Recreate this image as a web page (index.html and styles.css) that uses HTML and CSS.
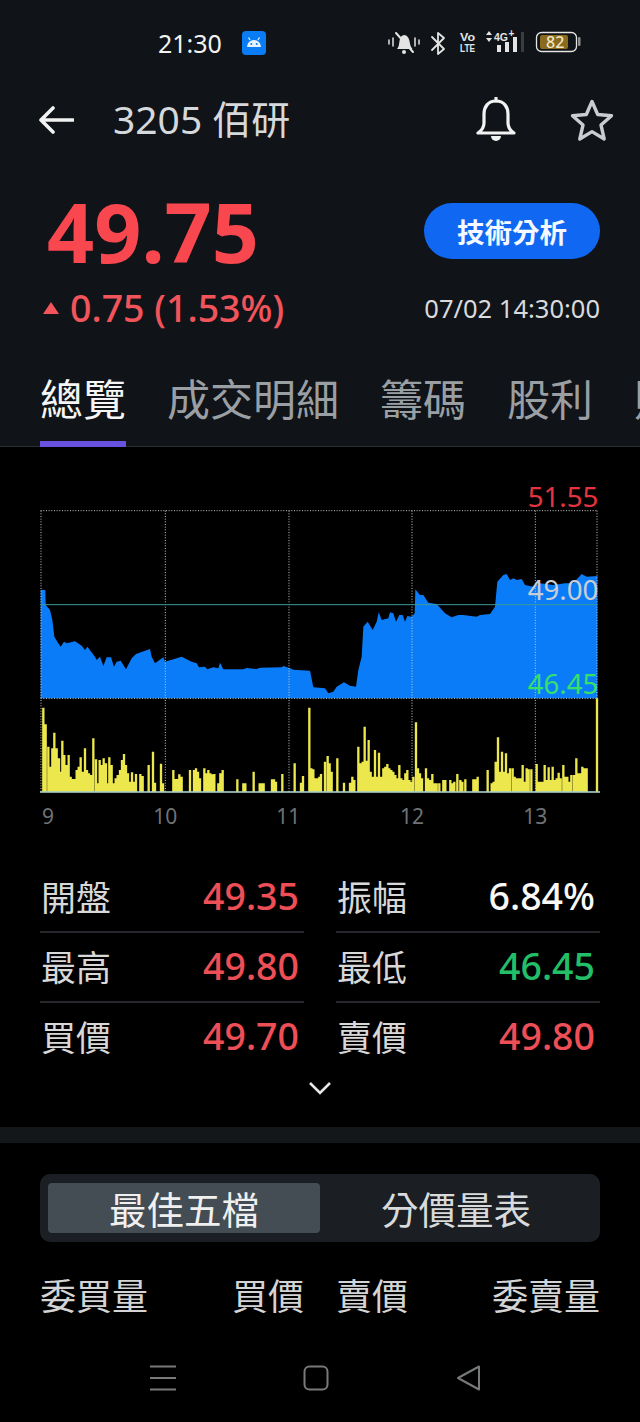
FILE: index.html
```html
<!DOCTYPE html>
<html lang="zh-Hant">
<head>
<meta charset="utf-8">
<title>3205 佰研</title>
<link rel="stylesheet" href="styles.css">
</head>
<body>
<div class="page">
  <header class="top">
    <div class="status">
      <span class="clock">21:30</span>
      <svg class="app-badge" viewBox="0 0 24 24"><rect width="24" height="24" rx="4" fill="#0a7cf5"/><path d="M5 16a7 7 0 0 1 14 0z" fill="#e8f2ff"/><path d="M8 9 6.500 6.500M16 9l1.500-2.500" stroke="#e8f2ff" stroke-width="1.200"/><circle cx="9.300" cy="13" r="1" fill="#0a7cf5"/><circle cx="14.700" cy="13" r="1" fill="#0a7cf5"/></svg>
      <svg class="status-icons" viewBox="0 0 194 30">
        <g fill="none" stroke="#e4e4e4" stroke-width="1.500" stroke-linecap="round">
          <path d="M1 12v4M5 10v8M27 10v8M31 12v4"/>
          <path d="M8 5 25 24" stroke-width="2"/>
          <path d="M44 9 56 21 50 26V5l6 5-12 12" stroke-width="1.800" stroke-linejoin="round"/>
        </g>
        <path d="M9 21c2-2 2-5 2.500-8 .5-4 2.500-6 4.500-6 3 0 5 3 5.500 6 .5 3 1 6 3 8z" fill="#e4e4e4"/>
        <circle cx="16" cy="24" r="2" fill="#e4e4e4"/>
        <text x="72" y="13" class="tiny" textLength="15" lengthAdjust="spacingAndGlyphs">Vo</text>
        <text x="72" y="24" class="tiny" textLength="15" lengthAdjust="spacingAndGlyphs">LTE</text>
        <path d="M98 7l3-4 3 4zM98 10l3 4 3-4z" fill="#e4e4e4"/>
        <text x="106" y="13" class="tiny" textLength="14" lengthAdjust="spacingAndGlyphs">4G</text>
        <text x="120.500" y="9" class="micro">+</text>
        <path d="M109 17h4v7h-4zM117 14h4v10h-4zM125 9h4v15h-4z" fill="#e4e4e4"/>
        <path d="M133 4h3v20h-3z" fill="#3a3d40"/>
        <rect x="148.500" y="4.500" width="40" height="19" rx="5" fill="none" stroke="#e4e4e4" stroke-width="1.300"/>
        <rect x="152" y="7" width="28" height="14" rx="2" fill="#8a6a1c"/>
        <rect x="190" y="9" width="2.500" height="9" rx="1" fill="#8f8f8f"/>
        <text x="158" y="20" class="batt">82</text>
      </svg>
    </div>
    <div class="titlebar">
      <svg class="back" viewBox="0 0 36 28"><path d="M35 14H3M15 2 3 14l12 12" fill="none" stroke="#f2f2f2" stroke-width="3.600" stroke-linecap="round" stroke-linejoin="round"/></svg>
      <h1 class="name">3205 佰研</h1>
      <svg class="bell" viewBox="0 0 42 46"><path d="M21 4c-8 0-12 6-12 13v9c0 4-3 8-6 10h36c-3-2-6-6-6-10v-9c0-7-4-13-12-13z" fill="none" stroke="#f2f2f2" stroke-width="3.200" stroke-linejoin="round"/><path d="M21 1v3" stroke="#f2f2f2" stroke-width="3.200" stroke-linecap="round"/><path d="M16 39a5 5 0 0 0 10 0z" fill="#f2f2f2"/></svg>
      <svg class="star" viewBox="0 0 44 44"><path d="M22 3.500 27.700 16.500 41.500 17.700 31 27 34.200 41 22 33.600 9.800 41 13 27 2.500 17.700 16.300 16.500z" fill="none" stroke="#c9ccd0" stroke-width="3.400" stroke-linejoin="round"/></svg>
    </div>
    <div class="quote">
      <div class="price">49.75</div>
      <button class="ta-btn">技術分析</button>
      <div class="change"><span class="tri"></span>0.75 (1.53%)</div>
      <div class="stamp">07/02 14:30:00</div>
    </div>
    <nav class="tabs">
      <span class="tab is-active">總覽</span>
      <span class="tab">成交明細</span>
      <span class="tab">籌碼</span>
      <span class="tab">股利</span>
      <span class="tab">財務</span>
    </nav>
  </header>

  <section class="chart-wrap">
    <svg class="chart" viewBox="0 0 1920 1050">
      <path class="area" d="M122 655V330H136L137 375 150 390 157 420 163 470 172 485 182 500 192 485 200 490 225 484 245 497 255 510 262 500 285 530 290 540 300 530 310 558 320 532 333 532 342 560 350 545 362 542 378 568 395 535 408 522 450 507 455 530 465 550 490 532 495 545 545 530 575 545 590 550 597 562 615 560 622 568 640 562 655 565 660 548 670 568 730 568 740 564 770 567 780 563 845 562 850 558 870 565 880 569 930 572 940 622 975 625 985 640 1000 635 1010 620 1032 607 1050 617 1068 620 1075 570 1085 530 1090 440 1103 425 1118 450 1130 425 1136 397 1145 420 1165 415 1170 397 1180 400 1188 425 1198 405 1208 405 1215 425 1222 408 1235 410 1244 400 1246 328 1260 345 1270 345 1285 368 1310 372 1335 400 1355 412 1375 405 1390 405 1430 410 1440 405 1470 402 1485 380 1492 305 1510 285 1520 282 1530 300 1540 295 1550 300 1565 297 1575 315 1600 320 1620 310 1660 315 1695 310 1720 310 1745 282 1760 290 1792 288V655z"/>
      <path class="grid" d="M122 92H1792M122 655H1792M123 92V935M496 92V935M867 92V935M1236 92V935M1606 92V935M1791 92V935"/>
      <path class="prev" d="M122 374H1792"/>
      <path class="vol" d="M130 935V683M137 935V733M145 935V800M151 935V860M157 935V805M163 935V758M170 935V805M177 935V835M182 935V875M187 935V782M193 935V825M200 935V855M206 935V825M212 935V890M218 935V897M224 935V897M230 935V870M236 935V860M242 935V832M248 935V875M255 935V805M261 935V870M267 935V880M273 935V885M280 935V775M288 935V838M294 935V910M299 935V840M305 935V855M311 935V835M318 935V850M323 935V910M328 935V832M335 935V855M341 935V910M347 935V895M353 935V885M360 935V870M366 935V840M372 935V822M378 935V855M384 935V880M390 935V905M396 935V877M402 935V905M408 935V882M421 935V882M428 935V888M446 935V855M459 935V815M465 935V908M483 935V851M489 935V910M520 935V870M526 935V897M532 935V897M538 935V883M545 935V890M570 935V870M582 935V870M588 935V865M594 935V875M600 935V895M613 935V865M619 935V880M625 935V870M631 935V880M637 935V883M643 935V882M655 935V910M661 935V880M668 935V870M712 935V898M730 935V910M736 935V910M761 935V875M779 935V910M785 935V910M791 935V910M816 935V898M822 935V898M828 935V905M847 935V882M884 935V850M903 935V908M909 935V888M928 935V683M934 935V865M940 935V868M946 935V895M952 935V895M958 935V890M963 935V882M975 935V845M983 935V828M989 935V850M995 935V875M1012 935V835M1032 935V908M1050 935V908M1057 935V890M1063 935V900M1075 935V800M1082 935V850M1088 935V845M1094 935V740M1100 935V842M1106 935V780M1112 935V875M1118 935V890M1125 935V810M1131 935V890M1137 935V818M1144 935V890M1150 935V865M1156 935V860M1162 935V852M1168 935V865M1174 935V870M1180 935V875M1186 935V885M1192 935V895M1198 935V855M1204 935V895M1210 935V900M1216 935V880M1222 935V870M1228 935V900M1234 935V905M1240 935V890M1248 935V727M1254 935V865M1260 935V880M1266 935V895M1278 935V865M1284 935V895M1290 935V900M1297 935V882M1303 935V910M1310 935V910M1318 935V910M1330 935V900M1336 935V900M1351 935V900M1357 935V910M1363 935V905M1372 935V882M1381 935V900M1387 935V905M1396 935V898M1420 935V898M1426 935V898M1433 935V890M1463 935V870M1475 935V910M1481 935V905M1487 935V845M1494 935V772M1500 935V875M1506 935V815M1512 935V875M1518 935V820M1524 935V880M1530 935V865M1538 935V865M1544 935V890M1550 935V895M1556 935V895M1562 935V895M1568 935V855M1574 935V905M1580 935V865M1586 935V868M1594 935V868M1610 935V852M1616 935V905M1622 935V905M1628 935V905M1634 935V855M1640 935V900M1646 935V862M1652 935V900M1658 935V860M1664 935V900M1670 935V895M1676 935V878M1682 935V895M1690 935V855M1696 935V890M1702 935V890M1708 935V905M1714 935V885M1722 935V885M1729 935V835M1735 935V880M1741 935V880M1747 935V860M1753 935V865M1760 935V865M1791 935V655"/>
      <path class="base" d="M120 936H1800"/>
      <text x="1795" y="80" class="lbl lbl-high">51.55</text>
      <text x="1795" y="359" class="lbl lbl-prev">49.00</text>
      <text x="1795" y="643" class="lbl lbl-low">46.45</text>
      <text x="144" y="1033" class="axis">9</text>
      <text x="496" y="1033" class="axis">10</text>
      <text x="865" y="1033" class="axis">11</text>
      <text x="1236" y="1033" class="axis">12</text>
      <text x="1606" y="1033" class="axis">13</text>
    </svg>
  </section>

  <section class="stats">
    <div class="stat"><span class="stat-k">開盤</span><span class="stat-v up">49.35</span></div>
    <div class="stat"><span class="stat-k">振幅</span><span class="stat-v flat">6.84%</span></div>
    <div class="stat"><span class="stat-k">最高</span><span class="stat-v up">49.80</span></div>
    <div class="stat"><span class="stat-k">最低</span><span class="stat-v down">46.45</span></div>
    <div class="stat no-line"><span class="stat-k">買價</span><span class="stat-v up">49.70</span></div>
    <div class="stat no-line"><span class="stat-k">賣價</span><span class="stat-v up">49.80</span></div>
  </section>
  <div class="more"><svg class="chev" viewBox="0 0 24 14"><path d="M2 2 12 12 22 2" fill="none" stroke="#e6e6e6" stroke-width="2.600"/></svg></div>
  <div class="band"></div>

  <div class="segment">
    <span class="seg is-active">最佳五檔</span>
    <span class="seg">分價量表</span>
  </div>
  <div class="book-head">
    <span class="bh-vol">委買量</span>
    <span class="bh-mid"><span>買價</span><span>賣價</span></span>
    <span class="bh-vol">委賣量</span>
  </div>

  <footer class="navbar">
    <svg class="nav-i nav-menu" viewBox="0 0 26 26"><path d="M0 1.500H26M0 13H26M0 24.500H26" stroke="#77797b" stroke-width="2"/></svg>
    <svg class="nav-i nav-home" viewBox="0 0 26 26"><rect x="1.500" y="1.500" width="23" height="23" rx="5" fill="none" stroke="#77797b" stroke-width="2"/></svg>
    <svg class="nav-i nav-back" viewBox="0 0 26 26"><path d="M23 1.500v23L2 13z" fill="none" stroke="#77797b" stroke-width="2" stroke-linejoin="round"/></svg>
  </footer>
</div>
</body>
</html>
```

FILE: styles.css
```css
* { box-sizing: border-box; margin: 0; padding: 0; }
html, body { background: #000; }
body { width: 640px; height: 1422px; overflow: hidden; font-family: "Noto Sans", "Noto Sans CJK TC", sans-serif; }
.page { width: 640px; height: 1422px; overflow: hidden; display: flex; flex-direction: column; background: #000; color: #e8e8e8; }

.top { background: #101317; height: 447px; border-bottom: 1px solid #2b2e32; flex: none; }
.status { height: 86px; display: flex; align-items: center; padding-left: 158px; }
.clock { font-size: 25px; color: #f2f2f2; width: 84px; line-height: 1; }
.app-badge { width: 24px; height: 24px; flex: none; }
.status-icons { width: 194px; height: 30px; margin-left: 122px; flex: none; }
.tiny { font: 700 10px "Liberation Sans", sans-serif; fill: #e4e4e4; }
.micro { font: 700 10px "Liberation Sans", sans-serif; fill: #e4e4e4; }
.batt { font: 500 16px "Noto Sans", sans-serif; fill: #f0e6c8; }

.titlebar { height: 68px; display: flex; align-items: center; padding-left: 38px; }
.back { width: 36px; height: 28px; flex: none; }
.name { font-size: 39px; font-weight: 400; color: #d6d9dc; margin: 0 0 4px 39px; width: 362px; line-height: 1; white-space: nowrap; }
.bell { width: 42px; height: 46px; flex: none; }
.star { width: 44px; height: 44px; margin-left: 53px; flex: none; }

.quote { display: grid; grid-template-columns: 1fr auto; padding: 0 40px 0 47px; margin-top: 49px; align-items: center; }
.price { font-size: 82.500px; font-weight: 700; line-height: 56px; color: #f9474f; }
.ta-btn { width: 176px; height: 56px; border: 0; border-radius: 28px; background: #1068f2; color: #f4f8ff; font: 700 27.500px "Noto Sans CJK TC", sans-serif; }
.change { font-size: 37.500px; font-weight: 500; line-height: 44px; color: #f2545b; margin-top: 27px; display: flex; align-items: center; margin-left: -4px; white-space: nowrap; }
.tri { width: 0; height: 0; border-left: 8px solid transparent; border-right: 8px solid transparent; border-bottom: 12px solid #f2545b; margin-right: 11px; }
.stamp { font-size: 25.500px; line-height: 30px; color: #d8dadc; margin-top: 26px; white-space: nowrap; text-align: right; }

.tabs { display: flex; gap: 41px; padding-left: 40px; margin-top: 40px; height: 77px; white-space: nowrap; }
.tab { font: 400 43px/54px "Noto Sans CJK TC", sans-serif; color: #9a9fa4; flex: none; height: 77px; border-bottom: 6px solid transparent; }
.tab.is-active { color: #f5f5f5; border-bottom-color: #6a52e0; }

.chart-wrap { height: 389px; padding-top: 33px; flex: none; }
.chart { display: block; width: 640px; height: 350px; overflow: visible; }
.area { fill: #0a7cf8; }
.grid { fill: none; stroke: #c9c9c9; stroke-width: 3; stroke-dasharray: 3 5; }
.prev { stroke: #3b9a9a; stroke-width: 3; }
.vol { fill: none; stroke: #ece74c; stroke-width: 7; }
.base { stroke: #b5e0d8; stroke-width: 4; }
.lbl { font-size: 83px; text-anchor: end; }
.lbl-high { fill: #e5343f; }
.lbl-prev { fill: #c8ced4; }
.lbl-low { fill: #35e06a; }
.axis { font-size: 63px; fill: #6f7275; text-anchor: middle; }

.stats { display: grid; grid-template-columns: 264px 264px; column-gap: 32px; padding: 0 40px; margin-top: 27px; flex: none; }
.stat { height: 70px; display: flex; justify-content: space-between; align-items: center; padding: 0 5px 3px 1px; border-bottom: 2px solid #26282b; }
.stat.no-line { border-bottom-color: transparent; }
.stat-k { font: 400 35px/1 "Noto Sans CJK TC", sans-serif; color: #d8d8d8; }
.stat-v { font-size: 37.500px; font-weight: 500; line-height: 1; }
.up { color: #ee4f57; }
.down { color: #22bf68; }
.flat { color: #f8f8f8; }

.more { height: 54px; display: flex; justify-content: center; align-items: flex-start; flex: none; padding-top: 8px; }
.chev { width: 24px; height: 14px; }
.band { height: 16px; background: #14171a; flex: none; }

.segment { margin: 31px 40px 0; height: 68px; padding: 9px 8px; border-radius: 10px; background: #1b1f23; display: grid; grid-template-columns: 272px 1fr; flex: none; }
.seg { font: 400 37.500px/50px "Noto Sans CJK TC", sans-serif; text-align: center; color: #d8dadc; border-radius: 4px; }
.seg.is-active { background: #454d54; color: #f0f0f0; }

.book-head { display: flex; justify-content: space-between; align-items: center; padding: 0 40px; margin-top: 27px; height: 50px; flex: none; font: 400 36px/1 "Noto Sans CJK TC", sans-serif; color: #d4d4d4; }
.bh-mid { display: flex; gap: 32px; }

.navbar { display: flex; align-items: center; padding-left: 150px; height: 30px; margin-top: 44px; flex: none; }
.nav-i { width: 26px; height: 26px; flex: none; }
.nav-home { margin-left: 127px; }
.nav-back { margin-left: 127px; }
```
